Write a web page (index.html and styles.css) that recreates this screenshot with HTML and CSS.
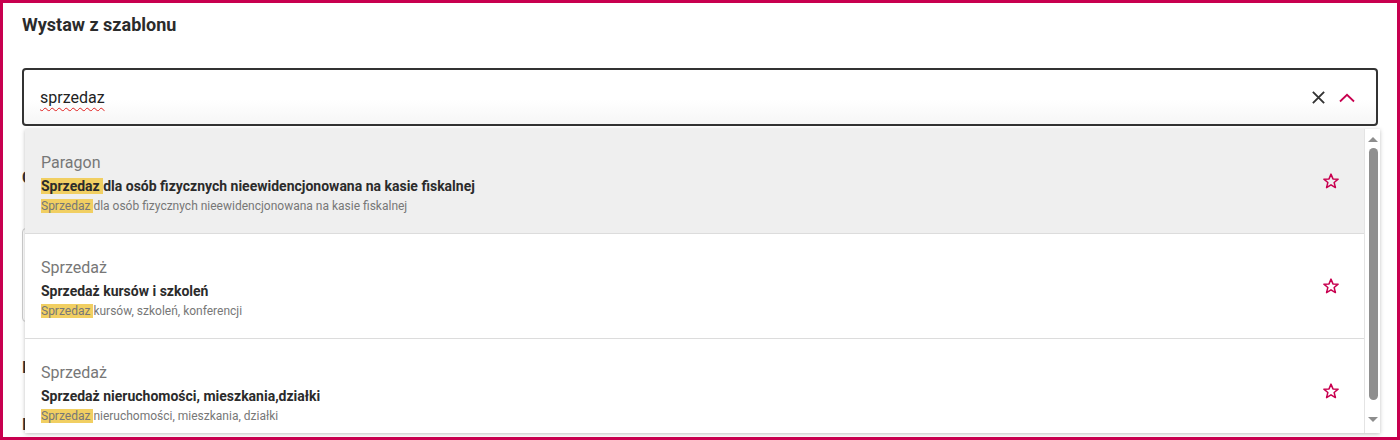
FILE: index.html
```html
<!DOCTYPE html>
<html lang="pl">
<head>
<meta charset="utf-8">
<link rel="stylesheet" href="styles.css">
</head>
<body>
<div class="frame">
  <h2 class="title">Wystaw z szablonu</h2>
  <div class="field">
    <div class="input">
      <span class="value">sprzedaz</span>
      <div class="actions">
        <svg class="clear" width="16" height="16" viewBox="0 0 16 16"><path d="M2 2 L14 14 M14 2 L2 14" stroke="#333" stroke-width="2" fill="none"/></svg>
        <svg class="chev" width="16" height="10" viewBox="0 0 16 10"><path d="M1 8.5 L8 1.8 L15 8.5" stroke="#c8004f" stroke-width="1.8" fill="none"/></svg>
      </div>
    </div>
    <div class="dropdown">
      <div class="list">
        <div class="item active">
          <div class="texts">
            <div class="cat">Paragon</div>
            <div class="name"><mark>Sprzedaz </mark>dla osób fizycznych nieewidencjonowana na kasie fiskalnej</div>
            <div class="desc"><mark>Sprzedaz </mark>dla osób fizycznych nieewidencjonowana na kasie fiskalnej</div>
          </div>
          <svg class="star" width="18" height="18" viewBox="0 0 24 24"><path d="M12 2.8 L14.6 9.2 L21.5 9.6 L16.2 14 L17.9 20.8 L12 17.1 L6.1 20.8 L7.8 14 L2.5 9.6 L9.4 9.2 Z" stroke="#c8004f" stroke-width="2" stroke-linejoin="round" fill="none"/></svg>
        </div>
        <div class="item">
          <div class="texts">
            <div class="cat">Sprzedaż</div>
            <div class="name">Sprzedaż kursów i szkoleń</div>
            <div class="desc"><mark>Sprzedaz </mark>kursów, szkoleń, konferencji</div>
          </div>
          <svg class="star" width="18" height="18" viewBox="0 0 24 24"><path d="M12 2.8 L14.6 9.2 L21.5 9.6 L16.2 14 L17.9 20.8 L12 17.1 L6.1 20.8 L7.8 14 L2.5 9.6 L9.4 9.2 Z" stroke="#c8004f" stroke-width="2" stroke-linejoin="round" fill="none"/></svg>
        </div>
        <div class="item">
          <div class="texts">
            <div class="cat">Sprzedaż</div>
            <div class="name">Sprzedaż nieruchomości, mieszkania,działki</div>
            <div class="desc"><mark>Sprzedaz </mark>nieruchomości, mieszkania, działki</div>
          </div>
          <svg class="star" width="18" height="18" viewBox="0 0 24 24"><path d="M12 2.8 L14.6 9.2 L21.5 9.6 L16.2 14 L17.9 20.8 L12 17.1 L6.1 20.8 L7.8 14 L2.5 9.6 L9.4 9.2 Z" stroke="#c8004f" stroke-width="2" stroke-linejoin="round" fill="none"/></svg>
        </div>
      </div>
      <div class="scrollbar">
        <div class="arrow up"></div>
        <div class="thumb"></div>
        <div class="arrow down"></div>
      </div>
    </div>
  </div>
  <div class="under">
    <div class="under-head">Cechy dokumentu</div>
    <div class="under-box"></div>
    <div class="under-line">Informacje</div>
    <div class="under-line second">Inne</div>
  </div>
</div>
</body>
</html>
```

FILE: styles.css
```css
* { box-sizing: border-box; }
html, body { margin: 0; padding: 0; background: #fff; }
body { font-family: Roboto, "Noto Sans", "Liberation Sans", sans-serif; color: #333; }

.frame {
  width: 1400px;
  height: 440px;
  border: 3px solid #c8004f;
  padding: 11px 19px 0 19px;
  overflow: hidden;
}

.title {
  margin: 0;
  font-size: 18px;
  line-height: 21px;
  font-weight: 700;
  color: #2b2b2b;
}

.field {
  position: relative;
  margin-top: 33px;
  width: 1356px;
}

.input {
  height: 58px;
  border: 2px solid #333;
  border-radius: 4px;
  background: linear-gradient(#fff 0%, #fff 55%, #f6f6f6 100%);
  display: flex;
  align-items: center;
  padding: 0 21px 0 16px;
}
.value {
  flex: 1;
  font-size: 16px;
  color: #222;
  text-decoration: underline wavy #e02020;
  text-decoration-thickness: 1px;
  text-underline-offset: 4px;
  text-decoration-skip-ink: none;
}
.actions { display: flex; align-items: center; gap: 13px; }
.clear { width: 15px; height: 15px; }
.chev { margin-top: 1px; }

.dropdown {
  position: absolute;
  left: 3px;
  top: 61px;
  width: 1355px;
  height: 304px;
  background: #fff;
  box-shadow: 0 1px 4px rgba(0,0,0,0.25);
  display: flex;
  overflow: hidden;
  z-index: 2;
}
.list { flex: 1; }
.item {
  height: 105px;
  display: flex;
  align-items: center;
  padding: 0 24px 0 16px;
  border-bottom: 1px solid #dcdcdc;
}
.item.active { background: #efefef; }
.texts { flex: 1; padding-top: 4px; }
.cat { font-size: 16px; line-height: 20px; color: #777; margin-bottom: 4px; }
.name { font-size: 14px; line-height: 18px; font-weight: 700; color: #2b2b2b; margin-bottom: 3px; }
.desc { font-size: 12px; line-height: 16px; color: #777; }
mark { background: #f1cf62; color: inherit; }
.star { flex: none; margin-top: 0; }

.scrollbar {
  width: 16px;
  border-left: 1px solid #e4e4e4;
  background: #fff;
  display: flex;
  flex-direction: column;
  align-items: center;
  padding: 0 0 0 1px;
}
.arrow { width: 0; height: 0; border-left: 5px solid transparent; border-right: 5px solid transparent; }
.arrow.up { border-bottom: 5px solid #8d8d8d; margin-top: 8px; }
.arrow.down { border-top: 5px solid #8d8d8d; margin-top: 17px; }
.thumb { width: 9px; height: 252px; background: #8f8f8f; border-radius: 5px; margin-top: 6px; }

.under { margin-top: 42px; }
.under-head { font-size: 16px; font-weight: 700; line-height: 20px; color: #333; }
.under-box { margin-top: 40px; height: 94px; border: 1px solid #ccc; border-radius: 4px; }
.under-line { margin-top: 36px; font-size: 16px; line-height: 20px; color: #333; font-weight: 700; }
.under-line.second { margin-top: 37px; }
```
